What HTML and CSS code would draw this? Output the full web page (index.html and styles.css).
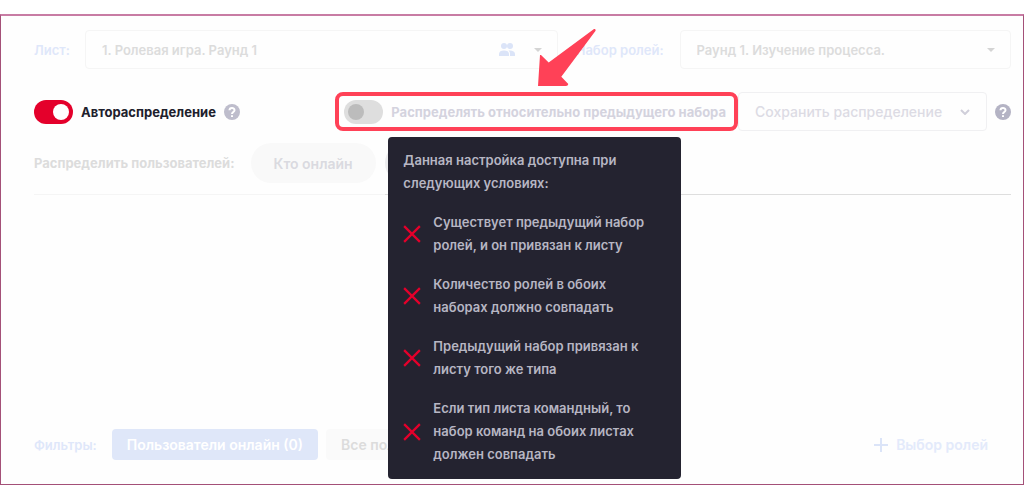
FILE: index.html
```html
<!DOCTYPE html>
<html lang="ru">
<head>
    <meta charset="UTF-8">
    <meta name="viewport" content="width=device-width, initial-scale=1.0">
    <link rel="stylesheet" href="styles.css">
    <title>Распределение ролей</title>
</head>
<body>
    <main class="panel">
        <div class="sheet-row">
            <label class="blue-label" for="sheet">Лист:</label>
            <div class="select-box">
                <select id="sheet">
                    <option>1. Ролевая игра. Раунд 1</option>
                </select>
                <svg class="people" viewBox="0 0 16 13" aria-hidden="true">
                    <circle cx="5" cy="3" r="3"/>
                    <circle cx="11" cy="3" r="3"/>
                    <path d="M0 13V11C0 8.500 2 7.500 5 7.500S10 8.500 10 11V13Z"/>
                    <path d="M11 13V11C11 9.500 10.500 8.500 9.500 7.600C13 7 16 8.500 16 11V13Z"/>
                </svg>
                <svg class="caret" viewBox="0 0 8 4" aria-hidden="true"><path d="M0 0H8L4 4Z"/></svg>
            </div>
            <label class="blue-label roles-label" for="roles">Набор ролей:</label>
            <div class="select-box">
                <select id="roles">
                    <option>Раунд 1. Изучение процесса.</option>
                </select>
                <svg class="caret" viewBox="0 0 8 4" aria-hidden="true"><path d="M0 0H8L4 4Z"/></svg>
            </div>
        </div>

        <div class="auto-row">
            <label class="switch-label">
                <input class="switch" type="checkbox" checked>
                Автораспределение
            </label>
            <svg class="help help-light" viewBox="0 0 16 16" aria-hidden="true">
                <circle cx="8" cy="8" r="8"/>
                <path d="M5.500 6.300C5.500 3.200 10.500 3.200 10.500 6.200C10.500 8 8 8 8 10M8 11.300V13"/>
            </svg>

            <div class="highlight">
                <label class="switch-label muted">
                    <input class="switch" type="checkbox" disabled>
                    Распределять относительно предыдущего набора
                </label>
                <svg class="arrow" viewBox="0 0 60 60" aria-hidden="true">
                    <path d="M0 58L2 27L3 27L10.700 34.500L56 1Q58 0.500 57.600 2.700L23.300 48.700L30.300 56Q30 58 28 58Z"/>
                </svg>
                <div class="tooltip" role="tooltip">
                    <p>Данная настройка доступна при следующих условиях:</p>
                    <ul>
                        <li>
                            <svg class="cross" viewBox="0 0 16 16" aria-hidden="true"><path d="M1 1L15 15M15 1L1 15"/></svg>
                            <span>Существует предыдущий набор ролей, и он привязан к листу</span>
                        </li>
                        <li>
                            <svg class="cross" viewBox="0 0 16 16" aria-hidden="true"><path d="M1 1L15 15M15 1L1 15"/></svg>
                            <span>Количество ролей в обоих наборах должно совпадать</span>
                        </li>
                        <li>
                            <svg class="cross" viewBox="0 0 16 16" aria-hidden="true"><path d="M1 1L15 15M15 1L1 15"/></svg>
                            <span>Предыдущий набор привязан к листу того же типа</span>
                        </li>
                        <li>
                            <svg class="cross" viewBox="0 0 16 16" aria-hidden="true"><path d="M1 1L15 15M15 1L1 15"/></svg>
                            <span>Если тип листа командный, то набор команд на обоих листах должен совпадать</span>
                        </li>
                    </ul>
                </div>
            </div>

            <button class="save" type="button">
                Сохранить распределение
                <svg viewBox="0 0 10 6" aria-hidden="true"><path d="M1 1L5 5L9 1"/></svg>
            </button>
            <svg class="help" viewBox="0 0 16 16" aria-hidden="true">
                <circle cx="8" cy="8" r="8"/>
                <path d="M5.500 6.300C5.500 3.200 10.500 3.200 10.500 6.200C10.500 8 8 8 8 10M8 11.300V13"/>
            </svg>
        </div>

        <div class="users-row">
            <span class="users-label">Распределить пользователей:</span>
            <button class="chip" type="button">Кто онлайн</button>
            <span class="chip chip-next"></span>
        </div>

        <div class="filters-row">
            <span class="blue-label">Фильтры:</span>
            <button class="filter active" type="button">Пользователи онлайн (0)</button>
            <button class="filter" type="button">Все пользователи</button>
            <button class="pick" type="button">
                <svg viewBox="0 0 14 14" aria-hidden="true"><path d="M7 0V14M0 7H14"/></svg>
                Выбор ролей
            </button>
        </div>
    </main>
</body>
</html>
```
FILE: styles.css
```css
* {
    box-sizing: border-box;
}

body {
    margin: 0;
    padding-top: 14px;
    min-height: 100vh;
    display: flex;
    background: #fff;
    font-family: "Inter", "Open Sans", sans-serif;
    font-size: 13px;
    font-weight: 600;
}

button,
select {
    font: inherit;
    margin: 0;
    border: none;
    background: none;
    cursor: pointer;
}

button {
    font-size: 14px;
}

.panel {
    flex: 1;
    display: flex;
    flex-direction: column;
    padding: 14px 12px 24px 33px;
    border: 1px solid #a45078;
    border-top: 2px solid #c87ca4;
    background: #fefefe;
}

.blue-label {
    color: #dfe7fa;
}

/* sheet and role set */
.sheet-row {
    display: grid;
    grid-template-columns: 51px 472fr 122px 331fr;
    align-items: center;
}

.roles-label {
    padding-right: 16px;
    text-align: right;
}

.select-box {
    position: relative;
}

.select-box select {
    appearance: none;
    display: block;
    width: 100%;
    height: 39px;
    padding: 0 40px 0 16px;
    border: 1px solid #f5f5f5;
    border-radius: 4px;
    color: #dcdcdc;
}

.caret {
    position: absolute;
    top: 18px;
    right: 16px;
    width: 8px;
    fill: #d4d4d4;
}

.people {
    position: absolute;
    top: 13px;
    right: 43px;
    width: 16px;
    fill: #dbe4f8;
}

/* switches */
.auto-row {
    display: flex;
    align-items: center;
    margin-top: 23px;
}

.switch-label {
    display: flex;
    align-items: center;
    gap: 8px;
    color: #20202c;
    font-weight: 700;
    white-space: nowrap;
}

.muted {
    color: #d4d3de;
}

.switch {
    appearance: none;
    flex: none;
    width: 39px;
    height: 24px;
    margin: 0;
    padding: 4px;
    border-radius: 12px;
    background: #dedede;
}

.switch::before {
    content: "";
    display: block;
    width: 16px;
    height: 16px;
    border-radius: 50%;
    background: #bcbcbc;
}

.switch:checked {
    background: #e4002b;
}

.switch:checked::before {
    margin-left: auto;
    background: #fff;
}

.help {
    flex: none;
    width: 16px;
    height: 16px;
    margin-left: 8px;
    fill: #b4b3c4;
}

.help path {
    fill: none;
    stroke: #fff;
    stroke-width: 2;
}

.help-light {
    fill: #bebdcc;
}

.highlight {
    position: relative;
    margin-left: auto;
    padding: 4px 8px 3px 5px;
    border: 4px solid #ff4157;
    border-radius: 8px;
}

.arrow {
    position: absolute;
    top: -68px;
    left: 199px;
    width: 60px;
    fill: #ff4157;
}

.tooltip {
    position: absolute;
    z-index: 1;
    top: 41px;
    left: 49px;
    width: 293px;
    padding: 12px 24px 13px 15px;
    border-radius: 4px;
    background: #242330;
    color: #b7b6c3;
    line-height: 23px;
}

.tooltip p {
    margin: 0;
}

.tooltip ul {
    margin: 0;
    padding: 0;
    list-style: none;
}

.tooltip li {
    display: flex;
    align-items: center;
    gap: 12px;
    margin-top: 16px;
}

.cross {
    flex: none;
    width: 18px;
    stroke: #e4002b;
    stroke-width: 2;
}

.save {
    display: flex;
    align-items: center;
    justify-content: space-between;
    width: 249px;
    height: 39px;
    padding: 0 16px;
    border: 1px solid #f0f0f2;
    border-radius: 4px;
    color: #dcdbe4;
    font-weight: 500;
    white-space: nowrap;
}

.save svg {
    width: 10px;
    fill: none;
    stroke: #d0cfda;
    stroke-width: 2;
}

/* quick distribution */
.users-row {
    display: flex;
    align-items: center;
    gap: 9px;
    margin-top: 12px;
    padding-bottom: 11px;
    border-bottom: 1px solid;
    border-image: linear-gradient(to right, #f5f5f5 36%, #dedede 36%) 1;
    color: #dcdcdc;
}

.users-label {
    margin-right: 7px;
    font-weight: 700;
}

.chip {
    height: 40px;
    padding: 0 23px;
    border-radius: 20px;
    background: #f9f9f9;
    color: #dadae0;
}

.chip-next {
    width: 125px;
    background: #ececee;
}

/* filters */
.filters-row {
    display: flex;
    align-items: center;
    gap: 8px;
    margin-top: auto;
}

.filter {
    height: 31px;
    padding: 0 15px;
    border-radius: 4px;
    background: #fafafa;
    color: #dcdcdc;
}

.active {
    margin-left: 7px;
    background: #dfe7f9;
    color: #fff;
}

.pick {
    display: flex;
    align-items: center;
    gap: 8px;
    margin-left: auto;
    margin-right: 23px;
    padding: 0;
    color: #e3eafb;
}

.pick svg {
    width: 14px;
    stroke: #dbe4f8;
    stroke-width: 2;
}
```
